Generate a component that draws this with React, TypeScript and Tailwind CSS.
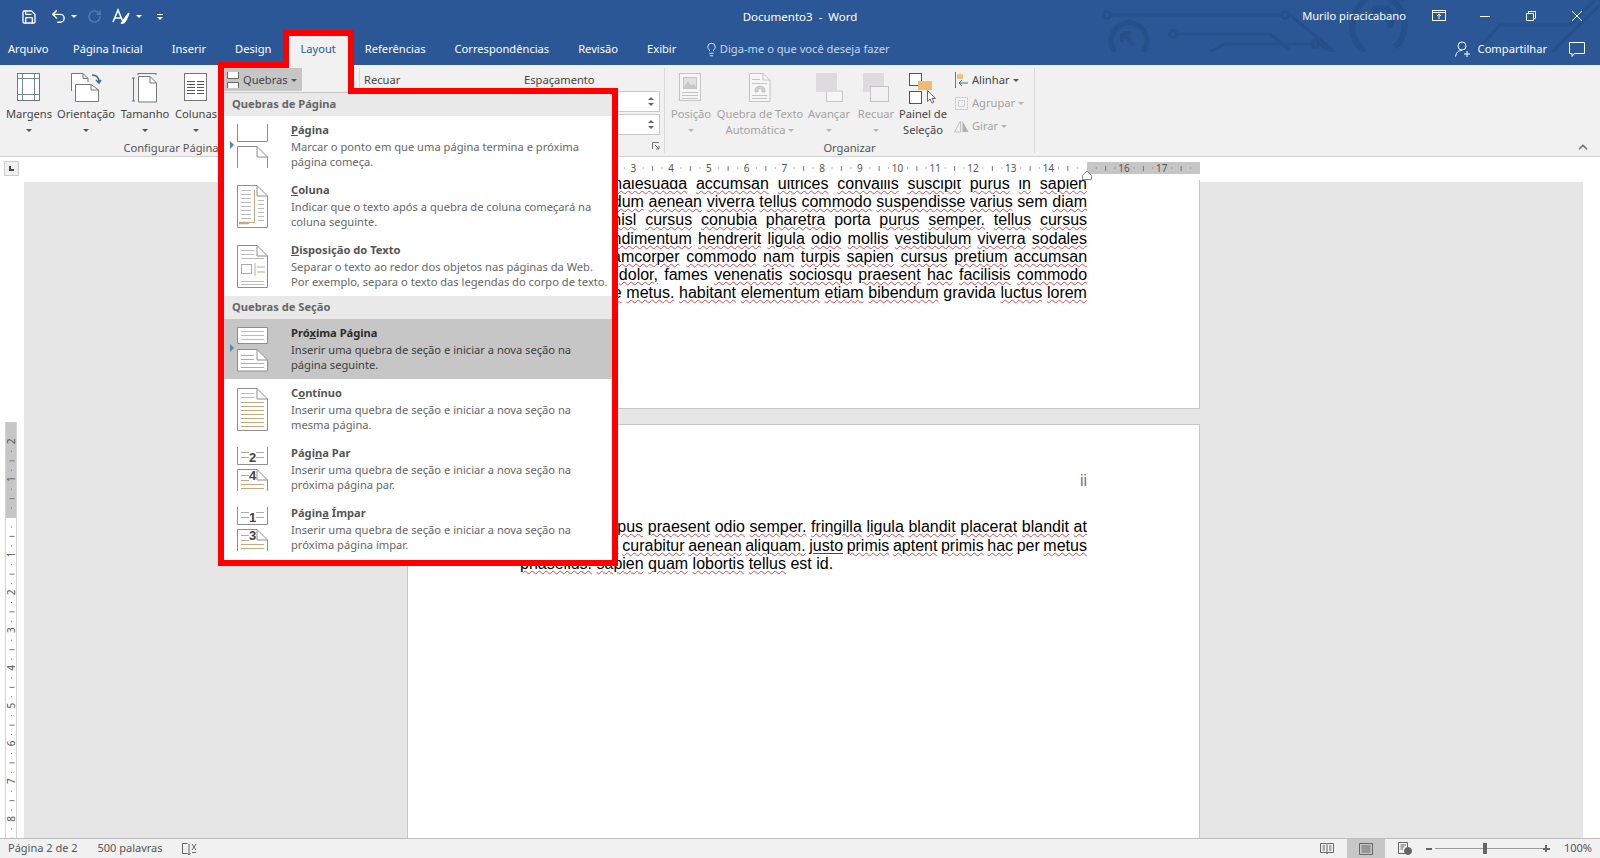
import React from "react";
import { Lightbulb, Save, Undo2, RotateCw, ChevronUp } from "lucide-react";

const tabs = ["Arquivo", "Página Inicial", "Inserir", "Design", "Layout", "Referências", "Correspondências", "Revisão", "Exibir"];

const Caret = ({ light }: { light?: boolean }) => (
  <span className={`inline-block h-0 w-0 border-x-[3px] border-t-[3px] border-x-transparent ${light ? "border-t-[#b5b5b5]" : "border-t-[#555]"}`} />
);

const RibbonButton = ({ w, label, label2, icon, disabled, caret = true }: any) => (
  <div className={`flex flex-col items-center shrink-0 ${w} ${disabled ? "text-[#a3a3a3]" : "text-[#444]"}`}>
    <div className="h-[33px] flex items-start justify-center">{icon}</div>
    <div className="h-[16px] leading-[16px] whitespace-nowrap">{label}</div>
    <div className="h-[16px] leading-[16px] whitespace-nowrap flex items-center gap-[3px]">
      {label2}
      {caret && <Caret light={disabled} />}
    </div>
  </div>
);

const MargensIcon = () => (
  <svg width="24" height="28" fill="none" stroke="#6f8a99" className="mt-[0px]">
    <rect x="0.5" y="0.5" width="22" height="27" fill="#fff" stroke="#777" />
    <path d="M5.5 1V27M17.5 1V27M1 5.5H22M1 21.5H22" />
  </svg>
);
const OrientacaoIcon = () => (
  <svg width="32" height="30" fill="none" stroke="#777">
    <path d="M1.5 18V.5H13L18 5.5V9M13 .5V5.5H18" fill="#fff" />
    <path d="M5.5 28.5V11.5H21L28.5 17V28.5Z" fill="#fff" />
    <path d="M21 11.5V17H28.5" />
    <path d="M22 2C27 2 29 4 29 9M26 7L29 10L31 7" stroke="#3f6f93" strokeWidth="1.6" />
  </svg>
);
const TamanhoIcon = () => (
  <svg width="26" height="30" fill="none" stroke="#777">
    <path d="M6.5 29V3.5H18L24.5 10V29Z" fill="#fff" />
    <path d="M18 3.5V10H24.5" />
    <path d="M6 .5H24M6 0V2M24 0V2M1.5 5V28M0 5H3M0 28H3" stroke="#4f7f9c" />
  </svg>
);
const ColunasIcon = () => (
  <svg width="24" height="29" fill="none" stroke="#8a8a8a">
    <rect x="0.5" y="0.5" width="22" height="27" fill="#fff" stroke="#777" />
    <path d="M3 8.5H11M13 8.5H20M3 11.5H11M13 11.5H20M3 14.5H11M13 14.5H20M3 17.5H11M13 17.5H20M3 20.5H11M13 20.5H20" stroke="#555" />
  </svg>
);
const PosicaoIcon = () => (
  <svg width="24" height="29" fill="none" stroke="#c4c4c4">
    <rect x="0.5" y="0.5" width="21" height="27" fill="#f6f6f6" />
    <rect x="4.5" y="4.5" width="13" height="11" fill="#e1e1e1" />
    <path d="M5 15L9 9L12 13L14 11L17 15" fill="#c9c9c9" />
    <path d="M3 19.5H19M3 22.5H19M3 25.5H19" />
  </svg>
);
const QuebraTextoIcon = () => (
  <svg width="22" height="29" fill="none" stroke="#c4c4c4">
    <path d="M.5 28.5V.5H14L21 7V28.5Z" fill="#f6f6f6" />
    <path d="M14 .5V7H21M3 6.5H11M3 10.5H18M3 22.5H18M3 25.5H18" />
    <path d="M6 19V17C6 12 16 12 16 17V19H13V17C13 15 9 15 9 17V19Z" fill="#cfcfcf" />
  </svg>
);
const AvancarIcon = () => (
  <svg width="27" height="29" fill="none">
    <path d="M10.5 18H26.5V28.5H10.5Z" stroke="#c4c4c4" fill="#f6f6f6" />
    <rect width="21" height="19" fill="#dedbde" />
  </svg>
);
const RecuarIcon = () => (
  <svg width="27" height="29" fill="none">
    <rect width="21" height="19" fill="#dedbde" />
    <rect x="7.5" y="13.5" width="18" height="15" stroke="#c4c4c4" fill="#f4f1f5" />
  </svg>
);
const PainelIcon = () => (
  <svg width="28" height="31" fill="none">
    <rect x="0.5" y="0.5" width="12" height="12" stroke="#555" fill="#fff" />
    <rect x="0.5" y="18.5" width="12" height="12" stroke="#555" fill="#fff" />
    <rect x="9" y="8" width="14" height="9" fill="#eebb70" />
    <path d="M17 17V15H19V17Z" fill="#eebb70" />
    <path d="M18.5 17.5V28.5L21 26L23 30L25 29L23 25.5H26.5Z" stroke="#666" fill="#fff" />
  </svg>
);

const MenuIcon = ({ kind }: { kind: string }) => {
  const g = "#8e8e8e";
  const o = "#c9a87e";
  if (kind === "pagina")
    return (
      <svg width="36" height="60" fill="none" stroke={g}>
        <path d="M3.5 8V25.5H33.5V8" />
        <path d="M3.5 52V30.5H23L33.5 41V52M23 30.5V41H33.5" />
      </svg>
    );
  if (kind === "coluna")
    return (
      <svg width="36" height="60" fill="none" stroke={g}>
        <path d="M3.5 51.5V9.5H23L33.5 20V51.5ZM23 9.5V20H33.5" fill="#fff" />
        <path d="M7 14.5H17M7 18.5H17M7 22.5H17M7 26.5H17M7 30.5H17M7 34.5H17M7 38.5H17M7 42.5H17M24 24.5H30M24 28.5H30M24 32.5H30M24 36.5H30M24 40.5H30M24 44.5H30" stroke="#bbb" />
        <path d="M20.5 14V46.5H7" stroke={o} />
        <path d="M5 47H15" stroke={o} strokeWidth="2.5" />
      </svg>
    );
  if (kind === "texto")
    return (
      <svg width="36" height="60" fill="none" stroke={g}>
        <path d="M3.5 51.5V9.5H23L33.5 20V51.5ZM23 9.5V20H33.5" fill="#fff" />
        <path d="M7 14.5H20M7 18.5H20M7 22.5H30M7 45.5H30M7 48.5H30" stroke="#bbb" />
        <rect x="7.5" y="28.5" width="10" height="9" stroke="#aaa" />
        <path d="M21 27V40M23 31H31M23 36H31" stroke={o} />
      </svg>
    );
  if (kind === "proxima")
    return (
      <svg width="36" height="60" fill="none" stroke={g}>
        <path d="M3.5 8.5H33.5V24.5H3.5Z" fill="#fff" />
        <path d="M7 12.5H30M7 16.5H30M7 20.5H30" stroke="#bbb" />
        <path d="M3.5 52V30.5H23L33.5 41V52Z" fill="#fff" />
        <path d="M23 30.5V41H33.5" />
        <path d="M7 36.5H20M7 40.5H20M7 44.5H30M7 48.5H30" stroke={o} />
      </svg>
    );
  if (kind === "continuo")
    return (
      <svg width="36" height="60" fill="none" stroke={g}>
        <path d="M3.5 51.5V9.5H23L33.5 20V51.5ZM23 9.5V20H33.5" fill="#fff" />
        <path d="M7 14.5H20M7 18.5H20" stroke="#bbb" />
        <path d="M7 23.5H30M7 27.5H30M7 31.5H30M7 35.5H30M7 39.5H30M7 43.5H30M7 47.5H30" stroke={o} />
      </svg>
    );
  const [a, b] = kind === "par" ? ["2", "4"] : ["1", "3"];
  return (
    <svg width="36" height="60" fill="none" stroke={g}>
      <path d="M3.5 8V25.5H33.5V8" fill="#fff" />
      <path d="M7 13.5H15M22 13.5H30M7 18.5H15M22 18.5H30" stroke="#aaa" />
      <text x="15" y="23" fontSize="13" fontWeight="700" fill="#444" stroke="none" fontFamily="'Liberation Sans', sans-serif">{a}</text>
      <path d="M3.5 52V30.5H23L33.5 41V52" fill="#fff" />
      <path d="M23 30.5V41H33.5" />
      <path d="M7 36.5H15M7 41.5H15M7 45.5H30M7 49.5H30" stroke={o} />
      <text x="15" y="41" fontSize="13" fontWeight="700" fill="#444" stroke="none" fontFamily="'Liberation Sans', sans-serif">{b}</text>
    </svg>
  );
};

const MenuItem = ({ kind, title, u, rest, pre, desc, desc2, active, pointer }: any) => (
  <div className={`relative h-[60px] flex ${active ? "bg-[#c6c6c6]" : "bg-white"}`}>
    {pointer && (
      <span className="absolute left-[6px] top-[25px] h-0 w-0 border-y-[4px] border-l-[4px] border-y-transparent border-l-[#4f87b5]" />
    )}
    <div className="w-[67px] pl-[10px] shrink-0">
      <MenuIcon kind={kind} />
    </div>
    <div className="pt-[6px] leading-[15.5px] whitespace-nowrap">
      <div className={`font-bold ${active ? "text-[#2b2b2b]" : "text-[#555]"}`}>
        {pre}
        <span className="underline">{u}</span>
        {rest}
        {title}
      </div>
      <div className={`mt-[1px] ${active ? "text-[#3c3c3c]" : "text-[#666]"}`}>{desc}</div>
      <div className={active ? "text-[#3c3c3c]" : "text-[#666]"}>{desc2}</div>
    </div>
  </div>
);

// "~" before a word means no spell check squiggle
const TextLine = ({ text, last, tight }: { text: string; last?: boolean; tight?: boolean }) => (
  <div className={`h-[18.2px] leading-[18.2px] whitespace-nowrap text-justify ${last ? "" : "[text-align-last:justify]"} ${tight ? "[word-spacing:-1px]" : ""}`}>
    {text.split(" ").map((w, i) =>
      w.startsWith("~") ? (
        <React.Fragment key={i}>{w.slice(1)} </React.Fragment>
      ) : w.startsWith("^") ? (
        <React.Fragment key={i}>
          <span className="underline decoration-[#1f4e8c] underline-offset-2">{w.slice(1)}</span>{" "}
        </React.Fragment>
      ) : (
        <React.Fragment key={i}>
          <span className="underline decoration-wavy decoration-[#d8484d] decoration-1 underline-offset-[1px]">{w}</span>{" "}
        </React.Fragment>
      )
    )}
  </div>
);

const HRuler = () => {
  const cm = 37.75;
  const x0 = 112;
  const marks = [];
  for (let i = -2; i <= 17; i++) {
    const x = x0 + i * cm;
    if (i > 0 && i !== 15) {
      marks.push(
        <text key={"n" + i} x={x} y={9.5} fontSize="10" textAnchor="middle" fill="#555">
          {i}
        </text>
      );
    }
    marks.push(<rect key={"a" + i} x={x + cm * 0.25} y={5.5} width="1" height="1" fill="#777" />);
    marks.push(<rect key={"b" + i} x={x + cm * 0.5} y={4} width="1" height="5" fill="#777" />);
    marks.push(<rect key={"c" + i} x={x + cm * 0.75} y={5.5} width="1" height="1" fill="#777" />);
  }
  return (
    <svg width="792" height="18" className="font-['Noto_Sans',sans-serif]">
      <rect y="0" width="792" height="12" fill="#fff" />
      <rect y="0" width="112" height="12" fill="#c6c6c6" />
      <rect x="679" y="0" width="113" height="12" fill="#c6c6c6" />
      {marks}
      <path d="M674.5 17.5V13.5L679 9L683.5 13.5V17.5Z" fill="#fff" stroke="#888" />
    </svg>
  );
};

const VRuler = () => {
  const cm = 37.75;
  const y0 = 95;
  const marks = [];
  for (let i = -2; i <= 8; i++) {
    const y = y0 + i * cm;
    if (i !== 0) {
      marks.push(
        <text key={"n" + i} transform={`translate(9 ${y}) rotate(-90)`} fontSize="10" textAnchor="middle" fill="#555">
          {Math.abs(i)}
        </text>
      );
    }
    for (const [f, wide] of [[0.25, 0], [0.5, 1], [0.75, 0]] as const) {
      marks.push(
        <rect key={`t${i}-${f}`} x={wide ? 3.5 : 5} y={y + cm * f} width={wide ? 5 : 1} height="1" fill="#777" />
      );
    }
  }
  return (
    <svg width="12" height="416" className="font-['Noto_Sans',sans-serif] border-x border-[#d4d4d4]">
      <rect width="12" height="96" fill="#c6c6c6" />
      {marks}
    </svg>
  );
};

export default function App() {
  return (
    <div className="relative w-[1600px] h-[858px] overflow-hidden flex flex-col bg-white text-[11.15px] font-['Noto_Sans',sans-serif]">
      {/* barra de titulo + abas */}
      <div className="relative h-[65px] shrink-0 bg-[#2b5797] text-white">
        <svg className="absolute left-[1100px] top-0" width="500" height="52" fill="none" stroke="#25508c" strokeWidth="3">
          <circle cx="7" cy="15" r="3.5" />
          <path d="M11 15H180" />
          <circle cx="185" cy="15" r="3.5" />
          <path d="M190 15L235 52" />
          <circle cx="73" cy="34" r="3.5" />
          <path d="M77 34H170L190 50" />
          <path d="M110 52L125 44H215" />
          <circle cx="215" cy="44" r="3.5" />
          <path d="M219 44L232 52" />
          <path d="M15 52A18 18 0 1 1 43 52" strokeWidth="5" />
          <path d="M22 33L34 45M22 33H31M22 33V42" strokeWidth="4" />
          <path d="M265 52A29 29 0 0 1 305 0" strokeWidth="6" opacity="1" />
          <path d="M272 -5A30 30 0 0 1 295 47" strokeWidth="6" />
          <path d="M272 8L294 24M272 8H290M290 8V28" strokeWidth="5" />
          <path d="M375 52L400 25H470L495 0" />
          <path d="M452 52L500 5" />
        </svg>
        <div className="relative h-[33px] grid grid-cols-[1fr_auto_1fr] items-center">
          <div className="flex items-center pl-[21px]">
            <Save size={16} strokeWidth={2} />
            <Undo2 size={17} strokeWidth={2} className="ml-[13px]" />
            <span className="ml-[4px] h-0 w-0 border-x-[3px] border-t-[3px] border-x-transparent border-t-white" />
            <RotateCw size={15} strokeWidth={2} className="ml-[10px] text-[#5b7fb5]" />
            <svg width="18" height="18" className="ml-[10px]" fill="none" stroke="#fff" strokeWidth="1.5">
              <path d="M1 14L6 2L11 14M3 10H9" />
              <path d="M9 15C11 15 11 12 13 10L17 5L14 12C13 14 11 16 9 15Z" fill="#fff" />
            </svg>
            <span className="ml-[6px] h-0 w-0 border-x-[3px] border-t-[3px] border-x-transparent border-t-white" />
            <span className="ml-[15px] flex flex-col items-center gap-[2px]">
              <span className="w-[6px] h-px bg-white" />
              <span className="h-0 w-0 border-x-[3px] border-t-[3px] border-x-transparent border-t-white" />
            </span>
          </div>
          <div className="whitespace-pre text-[11.5px]">Documento3  -  Word</div>
          <div className="flex items-center justify-end">
            <span className="mr-[26px]">Murilo piracicabano</span>
            <svg width="14" height="12" fill="none" stroke="#fff" className="mr-[34px]">
              <rect x="0.5" y="0.5" width="13" height="10" />
              <path d="M1 2.5H13M7 9V4M5 6L7 4L9 6" />
            </svg>
            <span className="w-[10px] h-px bg-white mr-[36px]" />
            <svg width="10" height="10" fill="none" stroke="#fff" className="mr-[36px]">
              <path d="M.5 2.5H7.5V9.5H.5ZM2.5 2V.5H9.5V7.5H8" />
            </svg>
            <svg width="10" height="10" stroke="#fff" className="mr-[18px]">
              <path d="M0 0L10 10M10 0L0 10" />
            </svg>
          </div>
        </div>
        <div className="relative h-[32px] flex items-stretch">
          {tabs.map((t) => (
            <div
              key={t}
              className={`flex items-center px-[14.5px] first:pl-[8px] first:pr-[10px] ${t === "Layout" ? "bg-[#f1f1f1] text-[#2b5797]" : ""}`}
            >
              {t}
            </div>
          ))}
          <div className="flex items-center ml-[13px] text-[#c9d6ea]">
            <Lightbulb size={15} strokeWidth={1.3} className="mr-[1px] text-white" />
            Diga-me o que você deseja fazer
          </div>
          <div className="ml-auto flex items-center pr-[15px]">
            <svg width="16" height="16" fill="none" stroke="#fff" className="mr-[7px]">
              <circle cx="7" cy="5" r="4" />
              <path d="M.5 15.5C1.5 11 3.5 9.5 7 9.5M9 13H15M12 10V16" />
            </svg>
            <span className="mr-[22px]">Compartilhar</span>
            <svg width="16" height="15" fill="none" stroke="#fff">
              <path d="M.5.5H15.5V11.5H5.5L3 14.5V11.5H.5Z" />
            </svg>
          </div>
        </div>
      </div>

      {/* faixa de opcoes */}
      <div className="relative h-[92px] shrink-0 bg-[#f1f1f1] border-b border-[#d2d2d2] flex text-[#444]">
        <div className="w-[360px] shrink-0 flex flex-col border-r border-[#dadada] my-[3px]">
          <div className="flex h-[74px] pt-[5px] pl-[4px]">
            <RibbonButton w="w-[50px]" label="Margens" icon={<MargensIcon />} />
            <RibbonButton w="w-[64px]" label="Orientação" icon={<OrientacaoIcon />} />
            <RibbonButton w="w-[54px]" label="Tamanho" icon={<TamanhoIcon />} />
            <RibbonButton w="w-[48px]" label="Colunas" icon={<ColunasIcon />} />
            <div className="ml-[4px] w-[78px] h-[23px] bg-[#c6c6c6] -mt-[5px] flex items-center gap-[3px] pl-[2px] pt-[1px]">
              <svg width="14" height="16" fill="#fff" stroke="#666">
                <path d="M1.5 0V6.5H12.5V0M1.5 16V10.5H12.5V16" />
              </svg>
              Quebras
              <Caret />
            </div>
          </div>
          <div className="w-[342px] text-center leading-[16px] mt-[2px] text-[#555]">Configurar Página</div>
        </div>
        <div className="w-[305px] shrink-0 flex flex-col relative border-r border-[#dadada] my-[3px] pr-[4px]">
          <div className="flex pt-[4px] pl-[4px]">
            <span className="w-[160px]">Recuar</span>
            <span>Espaçamento</span>
          </div>
          <div className="flex flex-col items-end gap-[2px] mt-[2px]">
            {[0, 1].map((i) => (
              <div key={i} className="w-[120px] h-[21px] bg-white border border-[#c8c8c8] flex flex-col items-end justify-center gap-[3px] pr-[5px]">
                <span className="h-0 w-0 border-x-[3px] border-b-[3px] border-x-transparent border-b-[#666]" />
                <span className="h-0 w-0 border-x-[3px] border-t-[3px] border-x-transparent border-t-[#666]" />
              </div>
            ))}
          </div>
          <div className="flex justify-end mt-[7px]">
            <svg width="8" height="8" fill="none" stroke="#777">
              <path d="M.5 7V.5H7M3 3L7 7M7 4V7H4" />
            </svg>
          </div>
        </div>
        <div className="w-[370px] shrink-0 flex flex-col border-r border-[#dadada] my-[3px]">
          <div className="flex h-[74px] pt-[5px]">
            <RibbonButton w="w-[52px]" label="Posição" disabled icon={<PosicaoIcon />} />
            <RibbonButton w="w-[86px]" label="Quebra de Texto" label2="Automática" disabled icon={<QuebraTextoIcon />} />
            <RibbonButton w="w-[52px]" label="Avançar" disabled icon={<AvancarIcon />} />
            <RibbonButton w="w-[42px]" label="Recuar" disabled icon={<RecuarIcon />} />
            <RibbonButton w="w-[52px]" label="Painel de" label2="Seleção" caret={false} icon={<PainelIcon />} />
            <div className="pl-[5px] -mt-[2px] flex flex-col gap-[5px]">
              <div className="h-[18px] flex items-center gap-[3px]">
                <svg width="15" height="16" fill="none">
                  <path d="M1.5 0V16" stroke="#777" />
                  <rect x="3" y="2" width="6" height="5" fill="#e9c27e" />
                  <path d="M14 11H5M8 8L5 11L8 14" stroke="#3f6f93" />
                </svg>
                Alinhar
                <Caret />
              </div>
              <div className="h-[18px] flex items-center gap-[3px] text-[#a3a3a3]">
                <svg width="15" height="15" fill="none" stroke="#c0c0c0" strokeDasharray="2 1">
                  <rect x="1.5" y="1.5" width="12" height="12" />
                  <rect x="4.5" y="4.5" width="6" height="6" />
                </svg>
                Agrupar
                <Caret light />
              </div>
              <div className="h-[18px] flex items-center gap-[3px] text-[#a3a3a3]">
                <svg width="15" height="14" fill="none">
                  <path d="M6.5 2L.5 13H6.5Z" stroke="#c0c0c0" />
                  <path d="M8.5 2L14.5 13H8.5Z" fill="#b0b0b0" />
                </svg>
                Girar
                <Caret light />
              </div>
            </div>
          </div>
          <div className="text-center leading-[16px] mt-[2px] text-[#555]">Organizar</div>
        </div>
        <div className="flex-1 flex items-end justify-end pr-[10px] pb-[2px]">
          <ChevronUp size={14} strokeWidth={3} className="text-[#777]" />
        </div>
      </div>

      {/* regua horizontal */}
      <div className="h-[23px] shrink-0 bg-white flex relative">
        <div className="ml-[4px] mt-[4px] w-[15px] h-[15px] bg-[#f1f1f1] border border-[#ccc] flex items-center justify-center">
          <span className="w-[5px] h-[5px] border-l-2 border-b-2 border-[#444]" />
        </div>
        <div className="ml-[389px] pt-[5px]">
          <HRuler />
        </div>
      </div>

      {/* documento */}
      <div className="flex-1 min-h-0 flex">
        <div className="w-[24px] shrink-0 pl-[5px] pt-[242px] bg-white overflow-hidden">
          <VRuler />
        </div>
        <div className="w-[383px] shrink-0 mt-[2px] bg-[#e6e6e6]" />
        <div className="w-[793px] shrink-0 flex flex-col overflow-hidden bg-[#e6e6e6] text-[16px] text-black font-['Liberation_Sans',sans-serif]">
          <div className="h-[229px] shrink-0 overflow-hidden bg-white border-x border-b border-[#c6c6c6] pl-[112px] pr-[112px]">
            <div className="-mt-[5px]">
              <TextLine text="Lorem ~nec malesuada accumsan ultrices convallis suscipit purus in sapien" />
              <TextLine text="Aliquet bibendum aenean viverra tellus commodo suspendisse varius ~sem diam" />
              <TextLine text="Scelerisque nisl cursus conubia pharetra ~porta purus semper. tellus cursus" />
              <TextLine text="Phasellus condimentum hendrerit ligula odio mollis vestibulum viverra sodales" />
              <TextLine text="Phasellus ullamcorper commodo nam turpis sapien cursus pretium accumsan" />
              <TextLine text="Phasellus ac dolor, ~fames venenatis sociosqu praesent hac facilisis commodo" />
              <TextLine text="Curabitur ante metus. habitant elementum etiam bibendum ~gravida luctus lorem" />
            </div>
          </div>
          <div className="h-[15px] shrink-0" />
          <div className="flex-1 bg-white border-x border-t border-[#c6c6c6] pl-[112px] pr-[112px] pt-[47px]">
            <div className="text-right leading-[18px] text-[#777]">ii</div>
            <div className="mt-[28px] [&>div]:h-[18.6px] [&>div]:leading-[18.6px]">
              <TextLine text="Lorem sit tempus praesent odio semper. fringilla ligula blandit placerat blandit at" />
              <TextLine tight text="Mauris cursus curabitur aenean aliquam. ^justo primis aptent primis hac ~per metus" />
              <TextLine last text="phasellus. sapien quam lobortis tellus ~est ~id." />
            </div>
          </div>
        </div>
        <div className="flex-1 mt-[2px] bg-[#e6e6e6]" />
        <div className="w-[17px] shrink-0 bg-white" />
      </div>

      {/* barra de status */}
      <div className="h-[20px] shrink-0 bg-[#f1f1f1] border-t border-[#bdbdbd] flex items-center text-[#555] text-[11px]">
        <span className="ml-[8px]">Página 2 de 2</span>
        <span className="ml-[20px]">500 palavras</span>
        <svg width="15" height="14" fill="none" stroke="#666" className="ml-[19px]">
          <path d="M5.5 1.5H.5V11.5H5.5L7 13L8.5 11.5M7 2V13" />
          <path d="M10 2L14 8M14 2L10 8M10 10.5H14" />
        </svg>
        <div className="ml-auto flex items-center h-full">
          <svg width="14" height="13" fill="none" stroke="#666" className="mr-[13px]">
            <path d="M.5 1.5H6.5L7 2L7.5 1.5H13.5V10.5H7.5L7 12L6.5 10.5H.5ZM7 2V11M2.5 4H5M2.5 6H5M2.5 8H5M9 4H11.5M9 6H11.5M9 8H11.5" />
          </svg>
          <div className="w-[38px] h-full bg-[#c6c6c6] flex items-center justify-center">
            <svg width="14" height="12" fill="none" stroke="#666">
              <path d="M.5.5H13.5V11.5H.5ZM2.5 3H11.5M2.5 5H11.5M2.5 7H11.5M2.5 9H11.5" />
            </svg>
          </div>
          <svg width="14" height="13" fill="none" stroke="#666" className="ml-[13px]">
            <path d="M7 11.5H.5V.5H9.5V5M2.5 3H8M2.5 5H6M2.5 7H5" />
            <circle cx="10" cy="9" r="3.5" fill="#666" />
          </svg>
          <span className="ml-[14px] w-[6px] h-[2px] bg-[#666]" />
          <div className="relative ml-[3px] w-[109px] h-px bg-[#999]">
            <span className="absolute left-[48px] -top-[5px] w-[4px] h-[11px] bg-[#666]" />
          </div>
          <span className="ml-[-1px] relative w-[7px] h-[7px] flex items-center justify-center">
            <span className="absolute w-[7px] h-[2px] bg-[#666]" />
            <span className="absolute w-[2px] h-[7px] bg-[#666]" />
          </span>
          <span className="ml-[14px] mr-[8px]">100%</span>
        </div>
      </div>

      {/* menu Quebras */}
      <div className="absolute left-[224px] top-[92px] w-[388px] h-[468px] bg-white border-t border-[#c6c6c6]">
        <div className="h-[23px] bg-[#e9e9e9] pl-[8px] font-bold text-[#666] leading-[21px]">Quebras de Página</div>
        <MenuItem kind="pagina" pointer u="P" rest="ágina" desc="Marcar o ponto em que uma página termina e próxima" desc2="página começa." />
        <MenuItem kind="coluna" u="C" rest="oluna" desc="Indicar que o texto após a quebra de coluna começará na" desc2="coluna seguinte." />
        <MenuItem kind="texto" u="D" rest="isposição do Texto" desc="Separar o texto ao redor dos objetos nas páginas da Web." desc2="Por exemplo, separa o texto das legendas do corpo de texto." />
        <div className="h-[23px] bg-[#e9e9e9] pl-[8px] font-bold text-[#666] leading-[21px]">Quebras de Seção</div>
        <MenuItem kind="proxima" active pointer pre="Pró" u="x" rest="ima Página" desc="Inserir uma quebra de seção e iniciar a nova seção na" desc2="página seguinte." />
        <MenuItem kind="continuo" pre="C" u="o" rest="ntínuo" desc="Inserir uma quebra de seção e iniciar a nova seção na" desc2="mesma página." />
        <MenuItem kind="par" pre="Pági" u="n" rest="a Par" desc="Inserir uma quebra de seção e iniciar a nova seção na" desc2="próxima página par." />
        <MenuItem kind="impar" pre="Págin" u="a" rest=" Ímpar" desc="Inserir uma quebra de seção e iniciar a nova seção na" desc2="próxima página ímpar." />
      </div>

      {/* contorno vermelho */}
      <svg className="absolute left-0 top-0 pointer-events-none" width="1600" height="858" fill="none">
        <path d="M221 65H286V33H351V91H615V563H221Z" stroke="#ff0000" strokeWidth="6" />
      </svg>
    </div>
  );
}
